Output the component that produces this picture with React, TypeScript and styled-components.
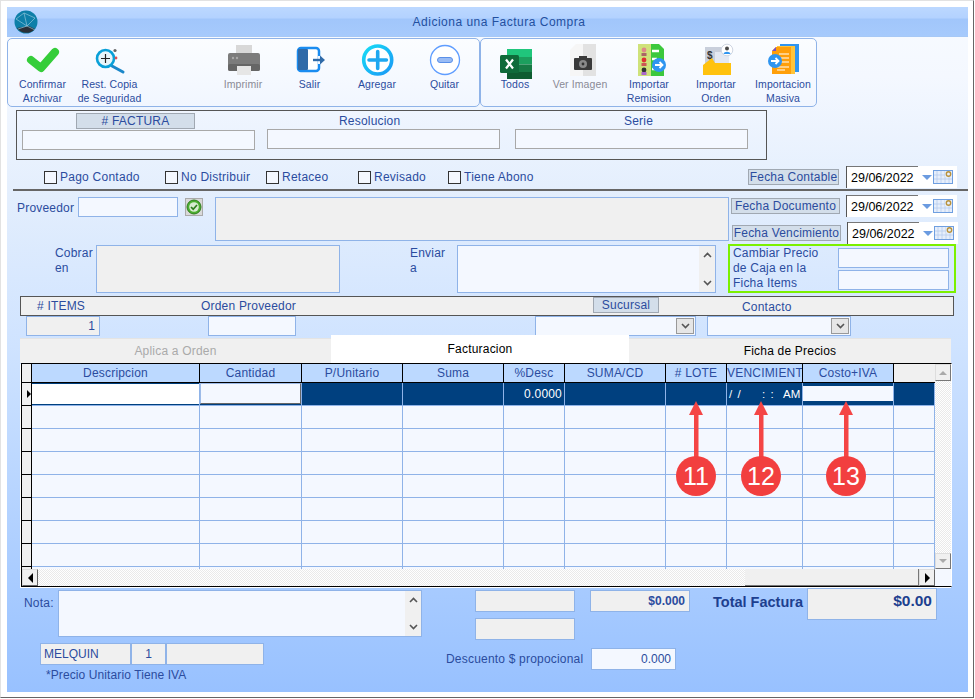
import styled, { createGlobalStyle } from 'styled-components'

const TEXT = '#2b4c9e'
const LINE = '#8fb3e8'
const FIELD = '#f4f8ff'
const GREY = '#f0f0f0'
const NAVY = '#00407f'

const GlobalStyle = createGlobalStyle`
  html, body {
    margin: 0;
    background: #fff;
    overflow: hidden;
  }
  * {
    box-sizing: border-box;
  }
`

const columns = [
  { name: 'Descripcion', w: 168 },
  { name: 'Cantidad', w: 102 },
  { name: 'P/Unitario', w: 101 },
  { name: 'Suma', w: 101 },
  { name: '%Desc', w: 61 },
  { name: 'SUMA/CD', w: 101 },
  { name: '# LOTE', w: 61 },
  { name: 'VENCIMIENT', w: 76 },
  { name: 'Costo+IVA', w: 91 },
  { name: '', w: 41 },
]

function CheckIcon() {
  return (
    <ToolSvg viewBox="0 0 36 36">
      <polyline points="6,18 16,26 30,10" fill="none" stroke="#35cd3a" strokeWidth="8" strokeLinecap="round" strokeLinejoin="round" />
    </ToolSvg>
  )
}

function RestoreIcon() {
  return (
    <ToolSvg viewBox="0 0 36 36">
      <line x1="20" y1="24" x2="31" y2="30" stroke="#1b87c9" strokeWidth="3" strokeLinecap="round" />
      <circle cx="13.5" cy="16.5" r="8.5" fill="#e8f6fb" stroke="#0aa0d8" strokeWidth="2.6" />
      <path d="M13.5 12v9M9 16.5h9" stroke="#222" strokeWidth="1.2" />
      <circle cx="23" cy="8.5" r="1.6" fill="#666" />
      <circle cx="24" cy="16" r="1.4" fill="#e05050" />
    </ToolSvg>
  )
}

function PrinterIcon() {
  return (
    <ToolSvg viewBox="0 0 36 36">
      <rect x="11" y="3" width="16" height="10" fill="#d8d8d8" />
      <rect x="3" y="11" width="32" height="18" rx="2" fill="#7c7c7c" />
      <rect x="3" y="22" width="32" height="7" rx="2" fill="#666" />
      <circle cx="8" cy="16" r="1.2" fill="#a8a8a8" />
      <circle cx="12" cy="16" r="1.2" fill="#a8a8a8" />
      <rect x="12" y="24" width="14" height="9" fill="#e6e6e6" />
    </ToolSvg>
  )
}

function ExitIcon() {
  return (
    <ToolSvg viewBox="0 0 36 36">
      <rect x="6" y="6" width="21" height="23" rx="3" fill="#fff" stroke="#1a8cf0" strokeWidth="2.5" />
      <rect x="6" y="7" width="10" height="21" rx="1" fill="#2f6aa8" />
      <rect x="26" y="14" width="4" height="8" fill="#f2f7ff" />
      <path d="M21 18h9" stroke="#2f6aa8" strokeWidth="2.4" />
      <path d="M28 13.5l5 4.5-5 4.5z" fill="#2f6aa8" />
    </ToolSvg>
  )
}

function AddIcon() {
  return (
    <ToolSvg viewBox="0 0 36 36">
      <defs>
        <linearGradient id="addRing" x1="0" y1="0" x2="1" y2="1">
          <stop offset="0" stopColor="#17dcf6" />
          <stop offset="1" stopColor="#1a98f5" />
        </linearGradient>
      </defs>
      <circle cx="18.7" cy="18" r="14" fill="#fff" stroke="url(#addRing)" strokeWidth="3.6" />
      <path d="M18.7 9.5v17M10 18h17.4" stroke="#1fa8f0" strokeWidth="3.6" strokeLinecap="round" />
    </ToolSvg>
  )
}

function RemoveIcon() {
  return (
    <ToolSvg viewBox="0 0 36 36">
      <circle cx="18" cy="18" r="14.5" fill="#fff" stroke="#5f9dff" strokeWidth="1.3" />
      <rect x="10.5" y="15.5" width="15" height="5" rx="2.5" fill="#9abcf5" stroke="#5b90e8" />
    </ToolSvg>
  )
}

function ExcelIcon() {
  return (
    <ToolSvg viewBox="0 0 36 36">
      <rect x="10" y="7" width="25" height="8" fill="#20c67c" />
      <rect x="10" y="15" width="25" height="7.5" fill="#1c9f5e" />
      <rect x="10" y="22.5" width="25" height="7.5" fill="#167a45" />
      <rect x="10" y="30" width="25" height="7" fill="#0e5c31" />
      <rect x="3" y="13" width="19" height="18" rx="1.5" fill="#0f6b3a" />
      <path d="M9 17.5l7 9M16 17.5l-7 9" stroke="#fff" strokeWidth="2.2" />
    </ToolSvg>
  )
}

function ImageIcon() {
  return (
    <ToolSvg viewBox="0 0 36 36">
      <path d="M8 8l6-6h7v32H8z" fill="#f6f6f6" />
      <rect x="21" y="2" width="13" height="32" fill="#e2e2e2" />
      <rect x="12" y="16" width="18" height="12" rx="1" fill="#3a3a3a" />
      <rect x="17" y="14" width="8" height="3" fill="#3a3a3a" />
      <circle cx="21" cy="22" r="4" fill="#8a8a8a" />
      <circle cx="21" cy="22" r="1.4" fill="#333" />
    </ToolSvg>
  )
}

function RemisionIcon() {
  return (
    <ToolSvg viewBox="0 0 36 36">
      <rect x="7" y="2" width="13" height="32" fill="#cfe27a" />
      <path d="M20 2h8l5 5v27H20z" fill="#3cc83c" />
      <circle cx="13" cy="8" r="2.4" fill="#d88" />
      <rect x="10.5" y="11" width="5" height="3" fill="#a66" />
      <circle cx="13" cy="18" r="2.4" fill="#d33" />
      <rect x="10.5" y="21" width="5" height="3" fill="#c55" />
      <circle cx="13" cy="28" r="2.4" fill="#333" />
      <rect x="10.5" y="30" width="5" height="3" fill="#a6c" />
      <path d="M21 9h7M21 17h5M21 27h4" stroke="#fff" strokeWidth="2.4" />
      <circle cx="28" cy="23" r="7" fill="#2f95f0" />
      <path d="M24 23h7M28.5 20l3 3-3 3" fill="none" stroke="#fff" strokeWidth="1.8" />
    </ToolSvg>
  )
}

function OrdenIcon() {
  return (
    <ToolSvg viewBox="0 0 36 36">
      <rect x="7" y="5" width="24" height="20" fill="#c9cfdb" />
      <rect x="17" y="10" width="14" height="12" fill="#e3e8f2" />
      <IconText x="9" y="17">$</IconText>
      <path d="M5 23l9-7 3 5h16v12H5z" fill="#ffc20e" />
      <circle cx="29" cy="8" r="5.8" fill="#fff" stroke="#cfd6e2" />
      <circle cx="29" cy="6.5" r="2" fill="#4a4a4a" />
      <path d="M25.5 12c.5-3 6.500-3 7 0z" fill="#2f95f0" />
    </ToolSvg>
  )
}

function MasivaIcon() {
  return (
    <ToolSvg viewBox="0 0 36 36">
      <rect x="15" y="2" width="19" height="28" fill="#2f95f0" />
      <rect x="12" y="4" width="18" height="28" fill="#ffc43a" />
      <path d="M7 9l4-4h15v27H7z" fill="#ff9f0a" />
      <path d="M7 9l4-4v4z" fill="#7b4fc0" />
      <path d="M14 12h10M14 16h10M14 20h10M12 25h12M12 28h8" stroke="#fff" strokeWidth="1.2" />
      <circle cx="10" cy="19" r="7" fill="#2f95f0" />
      <path d="M6 19h7M10.500 16l3 3-3 3" fill="none" stroke="#fff" strokeWidth="1.8" />
    </ToolSvg>
  )
}

function Globe() {
  return (
    <GlobeSvg viewBox="0 0 24 24">
      <circle cx="12" cy="12" r="11.500" fill="#0e7fa8" />
      <path d="M3 18a11.500 11.500 0 0 0 18 1l-6-3z" fill="#2b3038" />
      <path d="M2 9l8-6 3 13-9 3M10 3l11 5-8 8 8 4M2 9l11 7" fill="none" stroke="#8fc4da" strokeWidth=".7" />
    </GlobeSvg>
  )
}

function Chevron({ up }: { up?: boolean }) {
  return (
    <svg width="9" height="6" viewBox="0 0 9 6">
      <path d={up ? 'M1 5l3.500-3.500L8 5' : 'M1 1l3.500 3.500L8 1'} fill="none" stroke="#555" strokeWidth="1.6" />
    </svg>
  )
}

function DateField() {
  return (
    <DateBox>
      <DateText>29/06/2022</DateText>
      <DateArrow />
      <svg width="20" height="14" viewBox="0 0 20 14">
        <rect x=".5" y=".5" width="19" height="13" fill="#e6eefb" stroke="#6f9fe0" />
        <path d="M4 1v12M8 1v12M12 1v12M16 1v12M1 5h18M1 9h18" stroke="#b6cbef" strokeWidth=".8" />
        <rect x="12" y="1" width="7" height="6" fill="#e6eefb" />
        <circle cx="15.500" cy="4" r="2.200" fill="none" stroke="#b8923c" strokeWidth="1.400" />
      </svg>
    </DateBox>
  )
}

function Combo({ w, ml }: { w: number; ml: number }) {
  return (
    <ComboBox $w={w} $ml={ml}>
      <ComboButton>
        <Chevron />
      </ComboButton>
    </ComboBox>
  )
}

function Marker({ n, x }: { n: number; x: number }) {
  return (
    <MarkerWrap style={{ left: x - 42 }}>
      <svg width="40" height="56" viewBox="0 0 40 56">
        <polygon points="20,0 13,14 27,14" fill="#f44545" />
        <rect x="18" y="14" width="4.500" height="42" fill="#f44545" />
      </svg>
      <MarkerBadge>{n}</MarkerBadge>
    </MarkerWrap>
  )
}

export default function App() {
  return (
    <Frame>
      <GlobalStyle />
      <Window>
        <TitleBar>
          <Globe />
          <TitleText>Adiciona una Factura Compra</TitleText>
        </TitleBar>

        <Toolbars>
          <ToolPanel $w={473}>
            <Tool><CheckIcon /><ToolLabel>Confirmar<br />Archivar</ToolLabel></Tool>
            <Tool><RestoreIcon /><ToolLabel>Rest. Copia<br />de Seguridad</ToolLabel></Tool>
            <ToolGap />
            <Tool $w={66} $off><PrinterIcon /><ToolLabel>Imprimir</ToolLabel></Tool>
            <Tool><ExitIcon /><ToolLabel>Salir</ToolLabel></Tool>
            <Tool $w={68}><AddIcon /><ToolLabel>Agregar</ToolLabel></Tool>
            <Tool><RemoveIcon /><ToolLabel>Quitar</ToolLabel></Tool>
          </ToolPanel>
          <ToolPanel $w={337}>
            <Tool $w={66}><ExcelIcon /><ToolLabel>Todos</ToolLabel></Tool>
            <Tool $w={64} $off><ImageIcon /><ToolLabel>Ver Imagen</ToolLabel></Tool>
            <Tool $w={74}><RemisionIcon /><ToolLabel>Importar<br />Remision</ToolLabel></Tool>
            <Tool $w={60}><OrdenIcon /><ToolLabel>Importar<br />Orden</ToolLabel></Tool>
            <Tool $w={74}><MasivaIcon /><ToolLabel>Importacion<br />Masiva</ToolLabel></Tool>
          </ToolPanel>
        </Toolbars>

        <FacturaBox>
          <FacturaCol>
            <Tag $w={119} $ml={54}># FACTURA</Tag>
            <Input />
          </FacturaCol>
          <FacturaCol>
            <FacturaLabel $ml={72}>Resolucion</FacturaLabel>
            <Input />
          </FacturaCol>
          <FacturaCol>
            <FacturaLabel $ml={109}>Serie</FacturaLabel>
            <Input />
          </FacturaCol>
        </FacturaBox>

        <CheckRow>
          <Check $w={121}><Tick />Pago Contado</Check>
          <Check $w={101}><Tick />No Distribuir</Check>
          <Check $w={92}><Tick />Retaceo</Check>
          <Check $w={90}><Tick />Revisado</Check>
          <Check $w={300}><Tick />Tiene Abono</Check>
          <Tag $w={91} $mr={7}>Fecha Contable</Tag>
          <DateField />
        </CheckRow>
        <Separator />

        <ProveedorRow>
          <Label $w={61} $ml={10} $mt={6}>Proveedor</Label>
          <Field $w={100} $h={20} $mt={2} />
          <OkButton>
            <svg width="16" height="16" viewBox="0 0 16 16">
              <circle cx="8" cy="8" r="7" fill="#4caf30" stroke="#2f7d1e" />
              <circle cx="8" cy="8" r="4.800" fill="#d8ecd0" />
              <path d="M5 8l2.200 2.200L11 6" fill="none" stroke="#2f7d1e" strokeWidth="1.700" />
            </svg>
          </OkButton>
          <Field $w={514} $h={44} $ml={12} $mt={2} $grey />
          <DateColumn>
            <DateRow $ml={2}>
              <Tag $w={109} $mr={6}>Fecha Documento</Tag>
              <DateField />
            </DateRow>
            <DateRow $ml={3} $mt={5}>
              <Tag $w={109} $mr={6}>Fecha Vencimiento</Tag>
              <DateField />
            </DateRow>
          </DateColumn>
        </ProveedorRow>

        <CobrarRow>
          <Label $w={41} $ml={48} $mt={2}>Cobrar<br />en</Label>
          <Field $w={244} $h={48} $mt={1} $grey />
          <Label $w={47} $ml={70} $mt={2}>Enviar<br />a</Label>
          <Field $w={259} $h={48} $mt={1}>
            <MemoScroll>
              <Chevron up />
              <Chevron />
            </MemoScroll>
          </Field>
          <PricePanel>
            <PriceText>Cambiar Precio<br />de Caja en la<br />Ficha Items</PriceText>
            <PriceInputs>
              <Field $w={111} $h={20} />
              <Field $w={111} $h={20} />
            </PriceInputs>
          </PricePanel>
        </CobrarRow>

        <ItemsBar>
          <BarLabel $w={164} $ml={16}># ITEMS</BarLabel>
          <BarLabel $w={392}>Orden Proveedor</BarLabel>
          <Tag $w={66} $mr={83}>Sucursal</Tag>
          <BarLabel $w={60} $mt={1}>Contacto</BarLabel>
        </ItemsBar>
        <ItemsRow>
          <Field $w={74} $h={20} $ml={19} $grey $right>1</Field>
          <Field $w={88} $h={20} $ml={108} />
          <Combo w={161} ml={239} />
          <Combo w={144} ml={11} />
        </ItemsRow>

        <Tabs>
          <Tab $w={311} $off>Aplica a Orden</Tab>
          <Tab $w={298} $active>Facturacion</Tab>
          <Tab $w={322}>Ficha de Precios</Tab>
        </Tabs>

        <GridFrame>
          <GridTop>
            <GridBody>
              <HeaderRow>
                <RowHead />
                {columns.map((c) => (
                  <HeaderCell key={c.name} $w={c.w}>{c.name}</HeaderCell>
                ))}
              </HeaderRow>
              <DataRow $selected>
                <RowHead><RowPointer /></RowHead>
                {columns.map((c) => (
                  <Cell key={c.name} $w={c.w}>
                    {c.name === 'Descripcion' && <DescEdit />}
                    {c.name === 'Cantidad' && <QtyEdit />}
                    {c.name === '%Desc' && <CellValue>0.0000</CellValue>}
                    {c.name === 'VENCIMIENT' && <DateMask><span>/ /</span><span>: :</span><span>AM</span></DateMask>}
                    {c.name === 'Costo+IVA' && <CostEdit />}
                  </Cell>
                ))}
              </DataRow>
              {[1, 2, 3, 4, 5, 6, 7].map((r) => (
                <DataRow key={r}>
                  <RowHead />
                  {columns.map((c) => (
                    <Cell key={c.name} $w={c.w} />
                  ))}
                </DataRow>
              ))}
              <PartialRow>
                <RowHead />
                {columns.map((c) => (
                  <Cell key={c.name} $w={c.w} />
                ))}
              </PartialRow>
            </GridBody>
            <VScroll>
              <ScrollButton $h={17}><ScrollTri $dir="up" /></ScrollButton>
              <ScrollTrack />
              <ScrollButton $h={16}><ScrollTri $dir="down" /></ScrollButton>
            </VScroll>
          </GridTop>
          <HScroll>
            <HButton><BlackTri $left /></HButton>
            <ScrollTrack />
            <HThumb />
            <HButton><BlackTri /></HButton>
            <ScrollCorner />
          </HScroll>
          <Marker n={11} x={696} />
          <Marker n={12} x={761} />
          <Marker n={13} x={846} />
        </GridFrame>

        <Footer>
          <FooterLeft>
            <NotaRow>
              <Label $w={34} $ml={17} $mt={8}>Nota:</Label>
              <Field $w={364} $h={47} $mt={2}>
                <MemoScroll>
                  <Chevron up />
                  <Chevron />
                </MemoScroll>
              </Field>
            </NotaRow>
            <MetaRow>
              <MetaCell $w={91}>MELQUIN</MetaCell>
              <MetaCell $w={35} $center>1</MetaCell>
              <MetaCell $w={98} />
            </MetaRow>
            <FootNote>*Precio Unitario Tiene IVA</FootNote>
          </FooterLeft>
          <FooterRight>
            <TotalsRow>
              <Field $w={100} $h={22} $ml={29} $mt={2} $grey />
              <Field $w={100} $h={22} $ml={15} $mt={2} $grey $right $bold>$0.000</Field>
              <TotalLabel>Total Factura</TotalLabel>
              <TotalBox>$0.00</TotalBox>
            </TotalsRow>
            <Field $w={100} $h={22} $ml={29} $grey />
            <DiscountRow>
              <Label $w={145}>Descuento $ propocional</Label>
              <Field $w={85} $h={22} $right>0.000</Field>
            </DiscountRow>
          </FooterRight>
        </Footer>
      </Window>
    </Frame>
  )
}

const Frame = styled.div`
  width: 974px;
  height: 698px;
  padding: 6px 5px 5px 6px;
  border: 1px solid;
  border-color: #e2e2e2 #666 #666 #e2e2e2;
  font-family: 'Liberation Sans', Arial, sans-serif;
  font-size: 12px;
  color: ${TEXT};
`

const Window = styled.div`
  width: 961px;
  height: 685px;
  background: linear-gradient(180deg, #f8fbff 0, #f4f8ff 70px, #e3eefd 190px, #cfe3ff 340px, #a6caff 590px, #98c1ff 685px);
`

const TitleBar = styled.div`
  height: 30px;
  padding-top: 1px;
  display: flex;
  align-items: center;
  justify-content: center;
  position: relative;
  background: linear-gradient(180deg, #bcd8ff 0, #b3d2ff 11px, #a1c6fb 12px, #a6cafc 100%);
  border-bottom: 1px solid #a6c8f6;
`

const GlobeSvg = styled.svg`
  position: absolute;
  left: 7px;
  top: 3px;
  width: 24px;
  height: 24px;
`

const TitleText = styled.div`
  font-size: 12px;
  letter-spacing: 0.5px;
  color: #23509f;
  margin-left: 23px;
`

const Toolbars = styled.div`
  display: flex;
  margin-top: 1px;
`

const ToolPanel = styled.div<{ $w: number }>`
  width: ${({ $w }) => $w}px;
  height: 69px;
  display: flex;
  padding-left: 1px;
  border: 1px solid ${LINE};
  border-radius: 5px;
  background: linear-gradient(180deg, #fbfdff, #f1f6ff);
`

const Tool = styled.div<{ $off?: boolean; $w?: number }>`
  width: ${({ $w }) => $w ?? 67}px;
  flex: none;
  display: flex;
  flex-direction: column;
  align-items: center;
  padding-top: 3px;
  color: ${({ $off }) => ($off ? '#8a8a96' : TEXT)};
`

const ToolGap = styled.div`
  width: 67px;
  flex: none;
`

const ToolSvg = styled.svg`
  display: block;
  flex: none;
  width: 36px;
  height: 36px;
  margin-bottom: -1px;
  overflow: visible;
`

const IconText = styled.text`
  font-family: 'Liberation Sans', Arial, sans-serif;
  font-size: 10px;
  font-weight: bold;
  fill: #333;
`

const ToolLabel = styled.div`
  font-size: 10.5px;
  line-height: 14px;
  text-align: center;
  white-space: nowrap;
  letter-spacing: 0.1px;
`

const FacturaBox = styled.div`
  width: 751px;
  height: 50px;
  margin: 3px 0 0 9px;
  padding: 2px 0 0 5px;
  display: flex;
  border: 1px solid #555;
`

const FacturaCol = styled.div`
  width: 233px;
  margin-right: 12px;
  flex: none;

  &:nth-child(2) {
    margin-right: 15px;
  }
`

const FacturaLabel = styled.div<{ $ml: number }>`
  height: 15px;
  line-height: 17px;
  margin-left: ${({ $ml }) => $ml}px;
  letter-spacing: 0.2px;
`

const Tag = styled.div<{ $w: number; $ml?: number; $mr?: number }>`
  width: ${({ $w }) => $w}px;
  height: 16px;
  flex: none;
  margin-left: ${({ $ml }) => $ml ?? 0}px;
  margin-right: ${({ $mr }) => $mr ?? 0}px;
  line-height: 14px;
  text-align: center;
  white-space: pre;
  letter-spacing: 0.2px;
  background: #d3deea;
  border: 1px solid #a0a8b2;
`

const Input = styled.div`
  height: 20px;
  margin-top: 1px;
  background: ${FIELD};
  border: 1px solid #a8a8a8;
`

const CheckRow = styled.div`
  height: 22px;
  margin: 6px 0 0 37px;
  display: flex;
  align-items: center;
`

const Check = styled.div<{ $w: number }>`
  width: ${({ $w }) => $w}px;
  flex: none;
  display: flex;
  align-items: center;
  gap: 3px;
  letter-spacing: 0.25px;
`

const Tick = styled.div`
  width: 13px;
  height: 13px;
  flex: none;
  background: ${FIELD};
  border: 1px solid #333;
`

const DateBox = styled.div`
  width: 111px;
  height: 22px;
  flex: none;
  display: flex;
  align-items: center;
  background: #fff;
  border-left: 1px solid #555;
`

const DateText = styled.div`
  width: 71px;
  height: 22px;
  padding: 1px 0 0 4px;
  flex: none;
  font-size: 12.5px;
  line-height: 21px;
  color: #000;
  border-top: 1px solid #777;
`

const DateArrow = styled.div`
  width: 0;
  height: 0;
  margin: 0 1px 0 4px;
  flex: none;
  border-left: 5px solid transparent;
  border-right: 5px solid transparent;
  border-top: 5px solid #6b9be0;
`

const Separator = styled.div`
  height: 2px;
  margin: 1px 0 0 6px;
  background: #666;
`

const ProveedorRow = styled.div`
  height: 49px;
  margin-top: 4px;
  display: flex;
  align-items: flex-start;
`

const Label = styled.div<{ $w: number; $ml?: number; $mt?: number }>`
  width: ${({ $w }) => $w}px;
  flex: none;
  margin-left: ${({ $ml }) => $ml ?? 0}px;
  margin-top: ${({ $mt }) => $mt ?? 0}px;
  line-height: 15px;
  white-space: nowrap;
  letter-spacing: 0.2px;
`

const Field = styled.div<{ $w: number; $h: number; $ml?: number; $mt?: number; $grey?: boolean; $right?: boolean; $bold?: boolean }>`
  width: ${({ $w }) => $w}px;
  height: ${({ $h }) => $h}px;
  flex: none;
  margin-left: ${({ $ml }) => $ml ?? 0}px;
  margin-top: ${({ $mt }) => $mt ?? 0}px;
  padding: 0 4px;
  position: relative;
  line-height: ${({ $h }) => $h - 2}px;
  text-align: ${({ $right }) => ($right ? 'right' : 'left')};
  font-weight: ${({ $bold }) => ($bold ? 'bold' : 'normal')};
  background: ${({ $grey }) => ($grey ? GREY : FIELD)};
  border: 1px solid ${LINE};
`

const OkButton = styled.div`
  width: 18px;
  height: 18px;
  flex: none;
  margin: 3px 0 0 7px;
  display: flex;
  align-items: center;
  justify-content: center;
  background: #d9d9d9;
  border: 1px solid #aaa;
`

const DateColumn = styled.div`
  display: flex;
  flex-direction: column;
`

const DateRow = styled.div<{ $ml: number; $mt?: number }>`
  display: flex;
  align-items: center;
  margin-left: ${({ $ml }) => $ml}px;
  margin-top: ${({ $mt }) => $mt ?? 0}px;
`

const CobrarRow = styled.div`
  height: 49px;
  display: flex;
  align-items: flex-start;
`

const MemoScroll = styled.div`
  position: absolute;
  top: 0;
  right: 0;
  bottom: 0;
  width: 16px;
  padding: 6px 0;
  display: flex;
  flex-direction: column;
  align-items: center;
  justify-content: space-between;
  background: ${GREY};
`

const PricePanel = styled.div`
  width: 228px;
  height: 49px;
  flex: none;
  margin-left: 12px;
  padding: 2px 5px 0 3px;
  display: flex;
  justify-content: space-between;
  border: 2px solid #7cf000;
`

const PriceText = styled.div`
  margin-top: -2px;
  line-height: 15px;
  letter-spacing: 0.2px;
  white-space: nowrap;
`

const PriceInputs = styled.div`
  display: flex;
  flex-direction: column;
  gap: 2px;
`

const ItemsBar = styled.div`
  width: 934px;
  height: 20px;
  margin: 3px 0 0 13px;
  display: flex;
  align-items: flex-start;
  background: ${GREY};
  border: 1px solid #555;
`

const BarLabel = styled.div<{ $w: number; $ml?: number; $mt?: number }>`
  width: ${({ $w }) => $w}px;
  flex: none;
  margin-left: ${({ $ml }) => $ml ?? 0}px;
  margin-top: ${({ $mt }) => $mt ?? 0}px;
  line-height: 18px;
  white-space: pre;
  letter-spacing: 0.2px;
`

const ItemsRow = styled.div`
  height: 20px;
  display: flex;
`

const ComboBox = styled.div<{ $w: number; $ml: number }>`
  width: ${({ $w }) => $w}px;
  height: 20px;
  flex: none;
  margin-left: ${({ $ml }) => $ml}px;
  padding: 1px;
  display: flex;
  justify-content: flex-end;
  background: ${FIELD};
  border: 1px solid ${LINE};
`

const ComboButton = styled.div`
  width: 18px;
  height: 16px;
  display: flex;
  align-items: center;
  justify-content: center;
  background: #e6e6e6;
  border: 1px solid #999;
`

const Tabs = styled.div`
  width: 931px;
  height: 28px;
  margin: -1px 0 0 13px;
  display: flex;
  align-items: flex-end;
`

const Tab = styled.div<{ $w: number; $active?: boolean; $off?: boolean }>`
  width: ${({ $w }) => $w}px;
  height: ${({ $active }) => ($active ? 28 : 25)}px;
  flex: none;
  line-height: ${({ $active }) => ($active ? 26 : 25)}px;
  text-align: center;
  letter-spacing: 0.2px;
  color: ${({ $off }) => ($off ? '#aaa' : '#000')};
  background: ${({ $active }) => ($active ? '#fff' : GREY)};
  border-top: 1px solid ${({ $active }) => ($active ? '#fff' : '#e4e4e4')};
`

const GridFrame = styled.div`
  width: 931px;
  height: 224px;
  margin-left: 14px;
  position: relative;
  background: #fff;
  border-left: 1px solid #000;
  border-top: 1px solid #000;
  border-bottom: 1px solid #000;
  border-right: 1px solid #fff;
  box-shadow: -1px 1px 0 #fff;
`

const GridTop = styled.div`
  height: 205px;
  display: flex;
`

const GridBody = styled.div`
  width: 913px;
  flex: none;
`

const HeaderRow = styled.div`
  height: 19px;
  display: flex;
  background: ${GREY};
  border-bottom: 1px solid #000;
`

const RowHead = styled.div`
  width: 10px;
  flex: none;
  display: flex;
  align-items: center;
  justify-content: flex-end;
  background: ${GREY};
  border-right: 1px solid #000;
`

const HeaderCell = styled.div<{ $w: number }>`
  width: ${({ $w }) => $w}px;
  flex: none;
  overflow: hidden;
  line-height: 19px;
  text-align: center;
  white-space: nowrap;
  letter-spacing: 0.2px;
  background: ${({ children }) => (children ? '#bcd9ff' : GREY)};
  border-right: 1px solid ${({ children }) => (children ? '#000' : GREY)};
`

const DataRow = styled.div<{ $selected?: boolean }>`
  height: 23px;
  display: flex;
  background: ${({ $selected }) => ($selected ? NAVY : FIELD)};
  border-bottom: 1px solid ${LINE};
  color: #fff;

  & > ${RowHead} {
    margin-bottom: -1px;
    border-bottom: 1px solid #000;
  }
`

const PartialRow = styled.div`
  height: 2px;
  display: flex;
  background: ${FIELD};
`

const RowPointer = styled.div`
  width: 0;
  height: 0;
  border-top: 4px solid transparent;
  border-bottom: 4px solid transparent;
  border-left: 4px solid #000;
`

const Cell = styled.div<{ $w: number }>`
  width: ${({ $w }) => $w}px;
  flex: none;
  position: relative;
  border-right: 1px solid ${LINE};
`

const DescEdit = styled.div`
  height: 20px;
  margin-top: 1px;
  background: #fff;
`

const QtyEdit = styled.div`
  height: 21px;
  background: ${FIELD};
  border: 1px solid;
  border-color: #9dbbe8 #666 #666 #9dbbe8;
`

const CostEdit = styled.div`
  height: 15px;
  margin-top: 3px;
  background: ${FIELD};
`

const CellValue = styled.div`
  padding-right: 2px;
  line-height: 22px;
  text-align: right;
  letter-spacing: 0.2px;
`

const DateMask = styled.div`
  padding-left: 2px;
  display: flex;
  font-size: 11.5px;
  line-height: 22px;
  white-space: pre;

  span:nth-child(1) {
    width: 33px;
    letter-spacing: 1px;
  }
  span:nth-child(2) {
    width: 21px;
    letter-spacing: 1px;
  }
`

const VScroll = styled.div`
  width: 16px;
  flex: none;
  display: flex;
  flex-direction: column;
`

const ScrollButton = styled.div<{ $h: number }>`
  height: ${({ $h }) => $h}px;
  flex: none;
  display: flex;
  align-items: center;
  justify-content: center;
  background: ${GREY};
  border: 1px solid;
  border-color: #ddd #777 #777 #ddd;
`

const ScrollTri = styled.div<{ $dir: 'up' | 'down' }>`
  width: 0;
  height: 0;
  border-left: 4px solid transparent;
  border-right: 4px solid transparent;
  ${({ $dir }) => ($dir === 'up' ? 'border-bottom' : 'border-top')}: 4px solid #aaa;
`

const ScrollTrack = styled.div`
  flex: 1;
  background: repeating-conic-gradient(#eaeaea 0 25%, #fff 0 50%) 0 0 / 2px 2px;
`

const HScroll = styled.div`
  height: 17px;
  display: flex;
`

const HButton = styled.div`
  width: 16px;
  flex: none;
  display: flex;
  align-items: center;
  justify-content: center;
  background: ${GREY};
  border: 1px solid;
  border-color: #ddd #666 #666 #ddd;
`

const BlackTri = styled.div<{ $left?: boolean }>`
  width: 0;
  height: 0;
  border-top: 5px solid transparent;
  border-bottom: 5px solid transparent;
  ${({ $left }) => ($left ? 'border-right' : 'border-left')}: 5px solid #000;
`

const HThumb = styled.div`
  width: 174px;
  flex: none;
  background: ${GREY};
  border-bottom: 1px solid #777;
  border-right: 1px solid #777;
`

const ScrollCorner = styled.div`
  width: 16px;
  flex: none;
  background: ${FIELD};
`

const MarkerWrap = styled.div`
  position: absolute;
  top: 37px;
  width: 40px;
  display: flex;
  flex-direction: column;
  align-items: center;

  svg {
    display: block;
  }
`

const MarkerBadge = styled.div`
  width: 40px;
  height: 40px;
  margin-top: -1px;
  border-radius: 50%;
  background: #f23f3f;
  color: #fff;
  font-size: 25px;
  line-height: 40px;
  text-align: center;
`

const Footer = styled.div`
  margin-top: 1px;
  display: flex;
`

const FooterLeft = styled.div`
  width: 439px;
  flex: none;
`

const NotaRow = styled.div`
  display: flex;
  align-items: flex-start;
`

const MetaRow = styled.div`
  margin: 6px 0 0 33px;
  display: flex;
`

const MetaCell = styled.div<{ $w: number; $center?: boolean }>`
  width: ${({ $w }) => $w}px;
  height: 22px;
  flex: none;
  padding: 0 3px;
  line-height: 20px;
  text-align: ${({ $center }) => ($center ? 'center' : 'left')};
  background: ${GREY};
  border: 1px solid ${LINE};
`

const FootNote = styled.div`
  margin: 3px 0 0 39px;
  line-height: 15px;
  letter-spacing: 0.1px;
`

const FooterRight = styled.div`
  flex: 1;
`

const TotalsRow = styled.div`
  height: 30px;
  display: flex;
  align-items: flex-start;
`

const TotalLabel = styled.div`
  margin: 7px 0 0 23px;
  width: 94px;
  flex: none;
  font-size: 14.5px;
  font-weight: bold;
  line-height: 15px;
  white-space: nowrap;
  color: #1d3f8f;
`

const TotalBox = styled.div`
  width: 130px;
  height: 32px;
  flex: none;
  padding: 0 4px;
  font-size: 15.5px;
  font-weight: bold;
  line-height: 24px;
  text-align: right;
  color: #1d3f8f;
  background: ${GREY};
  border: 1px solid ${LINE};
`

const DiscountRow = styled.div`
  margin-top: 8px;
  display: flex;
  align-items: center;
`
